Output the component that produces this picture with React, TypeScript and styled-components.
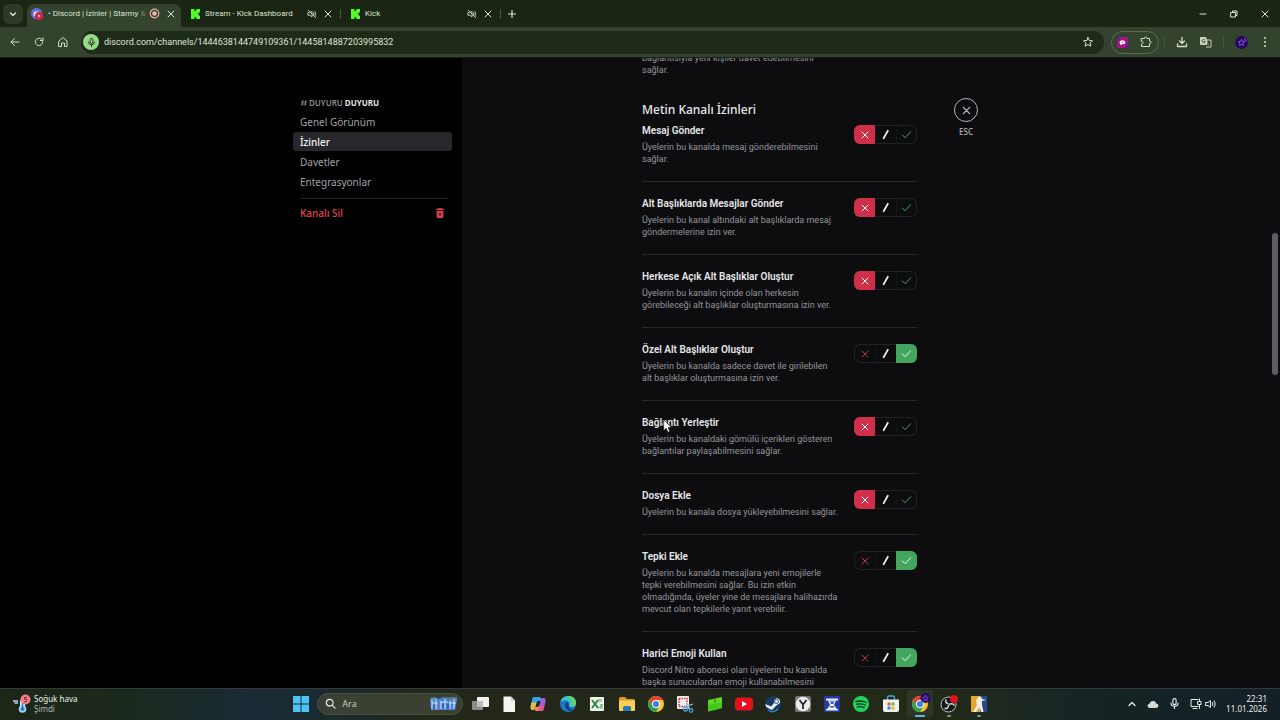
import React from "react";
import styled, { createGlobalStyle } from "styled-components";

const ui = `"Noto Sans", "Open Sans", sans-serif`;
const compact = `"Roboto", "Noto Sans", sans-serif`;

const GlobalStyle = createGlobalStyle`
  * { box-sizing: border-box; }
  html, body { margin: 0; background: #000; }
  body { font-family: ${ui}; overflow: hidden; }
  button { font-family: inherit; border: 0; padding: 0; background: none; color: inherit; }
  input { font-family: inherit; }
  svg { display: block; flex: none; }
`;

const Desktop = styled.div`
  display: flex;
  flex-direction: column;
  height: 100vh;
`;

/* ---------- Browser ---------- */

const TabStrip = styled.header`
  display: flex;
  align-items: stretch;
  flex: none;
  height: 27px;
  padding: 4px 0 0 3px;
  background: #1a2613;
  color: #dbe5d2;
`;

const TabSearch = styled.button`
  display: grid;
  place-items: center;
  width: 20px;
  height: 20px;
  margin-right: 4px;
  border-radius: 6px;
  background: #2c3a26 !important;
`;

const Tab = styled.div<{ $active?: boolean }>`
  display: flex;
  align-items: center;
  gap: 5px;
  flex: 0 1 ${(p) => (p.$active ? 154 : 159)}px;
  min-width: 0;
  padding: ${(p) => (p.$active ? "0 4px 4px" : "0 6px 4px 10px")};
  border-radius: 7px 7px 0 0;
  background: ${(p) => (p.$active ? "#34432e" : "transparent")};
`;

const TabTitle = styled.span`
  flex: 1;
  min-width: 0;
  white-space: nowrap;
  font-family: ${compact};
  font-size: 8px;
  line-height: 14px;
  span { color: #75846d; }
`;

const IconButton = styled.button`
  display: grid;
  place-items: center;
  flex: none;
  width: 12px;
  height: 16px;
`;

const Separator = styled.span<{ $tall?: boolean }>`
  flex: none;
  align-self: center;
  width: 1px;
  height: ${(p) => (p.$tall ? 12 : 10)}px;
  margin: ${(p) => (p.$tall ? "0 5px" : "0 0 4px")};
  background: #46573d;
`;

const NewTab = styled(IconButton)`
  width: 22px;
  height: 19px;
`;

const WindowControls = styled.div`
  display: flex;
  margin-left: auto;
  button { width: 31px; height: 19px; }
`;

const Toolbar = styled.div`
  display: flex;
  align-items: center;
  flex: none;
  height: 31px;
  padding: 0 3px 0 7px;
  border-bottom: 1px solid #18200f;
  background: #34432e;
  color: #d5dfcc;
`;

const NavButtons = styled.div`
  display: flex;
  gap: 8px;
  margin-right: 10px;
  button { width: 16px; }
`;

const AddressBar = styled.label`
  display: flex;
  align-items: center;
  flex: 1;
  height: 23px;
  gap: 5px;
  padding: 0 10px 0 2px;
  border-radius: 12px;
  background: #1e2b18;
`;

const MicBadge = styled.span`
  display: grid;
  place-items: center;
  width: 16px;
  height: 16px;
  border-radius: 50%;
  background: #9ad98c;
  color: #1d3516;
`;

const AddressInput = styled.input`
  flex: 1;
  min-width: 0;
  padding: 0;
  border: 0;
  outline: 0;
  background: none;
  color: #dde6d5;
  font-family: ${compact};
  font-size: 9px;
  line-height: 16px;
`;

const ExtensionPill = styled.div`
  display: flex;
  align-items: center;
  gap: 12px;
  height: 23px;
  margin-left: 7px;
  padding: 0 6px 0 5px;
  border: 1px solid #5b6e52;
  border-radius: 12px;
`;

const ToolbarEnd = styled.div`
  display: flex;
  align-items: center;
  button { width: 24px; }
`;

/* ---------- Channel settings ---------- */

const Settings = styled.div`
  display: flex;
  flex: 1;
  min-height: 0;
  overflow: hidden;
  background: #0d0d0f;
`;

const SidebarRegion = styled.aside`
  display: flex;
  justify-content: flex-end;
  flex: 1 0 132px;
  background: #000;
`;

const Sidebar = styled.nav`
  display: flex;
  flex-direction: column;
  gap: 1px;
  width: 169px;
  padding: 39px 10px 0 0;
`;

const SidebarHeading = styled.h2`
  display: flex;
  align-items: center;
  gap: 1px;
  margin: 0 0 2px;
  padding-left: 7px;
  color: #8b8c93;
  font-size: 8px;
  font-weight: 600;
  line-height: 12px;
  strong { color: #e4e4e8; font-weight: 700; }
`;

const SidebarLink = styled.a<{ $active?: boolean; $danger?: boolean }>`
  display: flex;
  align-items: center;
  justify-content: space-between;
  height: 19px;
  padding: 0 7px;
  border-radius: 3px;
  background: ${(p) => (p.$active ? "#28282c" : "transparent")};
  color: ${(p) => (p.$danger ? "#e04453" : p.$active ? "#f4f4f6" : "#a1a2a9")};
  font-size: 10px;
  font-weight: ${(p) => (p.$active || p.$danger ? 500 : 400)};
  line-height: 16px;
  text-decoration: none;
`;

const SidebarRule = styled.hr`
  width: 148px;
  height: 1px;
  margin: 6px 0 3px 7px;
  border: 0;
  background: #202023;
`;

const ContentRegion = styled.main`
  display: flex;
  flex: 1 1 488px;
  min-width: 0;
  padding-left: 180px;
`;

const PermissionColumn = styled.div`
  width: 275px;
  margin-top: -6px;
`;

const SectionTitle = styled.h1`
  margin: 24px 0 3px;
  color: #e9e9ec;
  font-size: 12px;
  font-weight: 500;
  line-height: 20px;
`;

const PermissionRow = styled.section`
  display: flex;
  justify-content: space-between;
  align-items: flex-start;
  padding-bottom: 16px;
  border-bottom: 1px solid #29292c;
  & + & { padding-top: 14px; }
`;

const PermissionName = styled.h3`
  margin: 0 0 2px;
  color: #e6e6ea;
  font-family: ${compact};
  font-size: 10px;
  font-weight: 600;
  line-height: 16px;
`;

const PermissionText = styled.p`
  margin: 0;
  color: #94959c;
  font-family: ${compact};
  font-size: 9px;
  line-height: 12px;
  white-space: pre;
`;

const ToggleGroup = styled.fieldset`
  display: flex;
  flex: none;
  height: 19px;
  margin: 2px 0 0;
  padding: 0;
  border: 0;
  border-radius: 6px;
  overflow: hidden;
  box-shadow: inset 0 0 0 1px #232326;
`;

const ToggleOption = styled.label<{ $fill: string; $ink: string }>`
  display: grid;
  place-items: center;
  width: 21px;
  height: 19px;
  color: ${(p) => p.$ink};
  & + & { box-shadow: inset 1px 0 #151517; }
  &:has(input:checked) { background: ${(p) => p.$fill}; color: #fff; box-shadow: none; }
  input, svg { grid-area: 1 / 1; }
  input { appearance: none; width: 100%; height: 100%; margin: 0; }
  svg { pointer-events: none; }
`;

const CloseColumn = styled.div`
  flex: none;
  width: 24px;
  margin: 40px 0 0 37px;
`;

const CloseButton = styled.button`
  display: flex;
  flex-direction: column;
  align-items: center;
  gap: 4px;
  width: 24px;
  color: #b4b5ba;
  font-size: 8px;
  font-weight: 500;
  line-height: 12px;
`;

const CloseRing = styled.span`
  display: grid;
  place-items: center;
  width: 24px;
  height: 24px;
  border: 1px solid #b2b3b8;
  border-radius: 50%;
`;

const ScrollThumb = styled.div`
  flex: none;
  width: 6px;
  height: 142px;
  margin: 175px 2px 0 auto;
  border-radius: 3px;
  background: #5c5c62;
`;

const Pointer = styled.svg`
  position: fixed;
  left: 663px;
  top: 419px;
`;

/* ---------- Taskbar ---------- */

const Taskbar = styled.footer`
  display: grid;
  grid-template-columns: 1fr 55vw 1fr;
  align-items: center;
  flex: none;
  height: 32px;
  padding-bottom: 2px;
  border-top: 1px solid #34383a;
  background: linear-gradient(90deg, #1c2716 0%, #1b291c 10%, #192a34 19%, #192a32 24%, #22281a 33%, #22261a 58%, #222b18 72%, #172425 85%, #132026 100%);
  color: #eef0ee;
`;

const Weather = styled.button`
  display: flex;
  align-items: center;
  gap: 3px;
  padding-left: 13px !important;
  text-align: left;
  font-size: 8px;
  line-height: 10px;
  small { display: block; font-size: 8px; color: #b3b9b3; }
`;

const Apps = styled.div`
  display: flex;
  align-items: center;
  justify-content: space-between;
`;

const AppButton = styled.button<{ $active?: boolean; $open?: boolean }>`
  display: grid;
  place-items: center;
  position: relative;
  width: 26px;
  height: 27px;
  border-radius: 3px;
  background: ${(p) => (p.$active ? "#303627" : "none")};
  &::after {
    content: "";
    position: absolute;
    bottom: 0;
    width: ${(p) => (p.$active ? 10 : p.$open ? 4 : 0)}px;
    height: 2px;
    border-radius: 1px;
    background: ${(p) => (p.$active ? "#62b7df" : "#8b9187")};
  }
`;

const SearchBox = styled.label`
  display: flex;
  align-items: center;
  gap: 6px;
  width: 146px;
  height: 22px;
  padding: 0 4px 0 7px;
  border: 1px solid #49503f;
  border-radius: 11px;
  background: #3a4133;
`;

const SearchInput = styled.input`
  flex: 1;
  min-width: 0;
  padding: 0;
  border: 0;
  outline: 0;
  background: none;
  font-size: 9px;
  line-height: 14px;
  &::placeholder { color: #c3c8be; opacity: 1; }
`;

const Tray = styled.div`
  display: flex;
  align-items: center;
  justify-content: flex-end;
  gap: 9px;
  padding-right: 13px;
`;

const TrayPair = styled.div`
  display: flex;
  gap: 3px;
`;

const Clock = styled.time`
  font-size: 8px;
  line-height: 10px;
  text-align: right;
`;

/* ---------- Icons ---------- */

type LineProps = { d: string; size?: number; width?: number; box?: number };

const Line = ({ d, size = 12, width = 1, box = 12 }: LineProps) => (
  <svg width={size} height={size} viewBox={`0 0 ${box} ${box}`} fill="none" stroke="currentColor" strokeWidth={width} strokeLinecap="round" strokeLinejoin="round" aria-hidden="true">
    <path d={d} />
  </svg>
);

const X = "M3 3l6 6M9 3l-6 6";
const MUTED = "M1.500 4.500h2l2.500-2v7l-2.500-2h-2zM8 4.500q1 1.500 0 3M9.500 3q2 3 0 6M1.500 1.500l9 9";
const MIC = "M6 1.500q1.500 0 1.500 1.500v2.500q0 1.500-1.500 1.500t-1.500-1.500v-2.500q0-1.500 1.500-1.500zM2.700 5.500q0 3 3.300 3t3.300-3M6 8.500v2.200";

const DiscordTabIcon = () => (
  <svg width="12" height="12" viewBox="0 0 12 12" aria-hidden="true">
    <circle cx="5.500" cy="5.500" r="5.500" fill="#6670dc" />
    <path d="M2.500 7.500q0-3 1.200-4h3.600q1.200 1 1.200 4l-1.500.8-.7-.9H4.700l-.7.9z" fill="#dfe2ff" />
    <circle cx="8" cy="8" r="4" fill="#d8234a" />
    <circle cx="8" cy="8" r="1" fill="#fff" />
  </svg>
);

const KickIcon = () => (
  <svg width="9" height="10" viewBox="0 0 9 10" aria-hidden="true">
    <path d="M0 0h3.500v2.200h1.100V1.100h1.100V0H9v3.300H7.900v1.100H6.800v1.200h1.100v1.100H9V10H5.700V8.900H4.600V7.800H3.500V10H0z" fill="#53fc28" />
  </svg>
);

const RecordIcon = () => (
  <svg width="11" height="11" viewBox="0 0 11 11" aria-hidden="true">
    <circle cx="5.500" cy="5.500" r="4.300" fill="none" stroke="#e7b3a4" strokeWidth="1.200" />
    <circle cx="5.500" cy="5.500" r="2.300" fill="#efb7a9" />
  </svg>
);

const ExtensionBadge = () => (
  <svg width="11" height="11" viewBox="0 0 11 11" aria-hidden="true">
    <rect width="11" height="11" fill="#a3157f" />
    <path d="M0 0h4L0 5zM11 11H7l4-4z" fill="#5c1b9c" />
    <path d="M2.500 5.500q.5-2.300 3.200-2.200Q8.500 3.500 8.500 5.500 8.200 7.300 5.500 7.200L3.500 8z" fill="#fff" />
    <path d="M4.500 5.700l2-.9" stroke="#a3157f" strokeWidth=".8" />
  </svg>
);

const ProfileIcon = ({ size = 13 }: { size?: number }) => (
  <svg width={size} height={size} viewBox="0 0 14 14" aria-hidden="true">
    <circle cx="7" cy="7" r="7" fill="#25075f" />
    <path d="M10 1l3 5-3-1z" fill="#7b4fc0" />
    <path d="M7 3.700l1 2.200 2.400.3-1.800 1.600.5 2.400L7 9l-2.100 1.200.5-2.400-1.800-1.600L6 5.900z" fill="none" stroke="#9c5bf5" strokeWidth=".9" />
  </svg>
);

const TrashIcon = () => (
  <svg width="10" height="10" viewBox="0 0 10 10" aria-hidden="true">
    <path d="M3.500 0h3v.8H9V2H1V.8h2.500zM1.600 2.800h6.800V8.600Q8.400 10 7 10H3Q1.600 10 1.600 8.600z" fill="#da4456" />
    <path d="M4 4.700l2 3M6 4.700l-2 3" stroke="#35070e" strokeWidth=".8" />
  </svg>
);

const ChromeIcon = ({ badge = false }: { badge?: boolean }) => (
  <svg width="22" height="22" viewBox="0 0 22 22" aria-hidden="true">
    <circle cx="11" cy="11" r="8" fill="#f5c52d" />
    <path d="M4.100 7A8 8 0 0 1 18 7h-7A4 4 0 0 0 7.500 13z" fill="#e0422f" />
    <path d="M4.100 7A8 8 0 0 0 11 19l3.500-6a4 4 0 0 1-7 0z" fill="#2fa04e" />
    <circle cx="11" cy="11" r="4" fill="#fff" />
    <circle cx="11" cy="11" r="3.100" fill="#3e7fe8" />
    {badge && (
      <g>
        <circle cx="16.500" cy="5" r="5" fill="#2a0b66" />
        <path d="M16.500 2.500l.8 1.700 1.900.2-1.400 1.300.4 1.900-1.700-1-1.700 1 .4-1.900-1.400-1.300 1.900-.2z" fill="none" stroke="#9c6bf0" strokeWidth=".6" />
      </g>
    )}
  </svg>
);

const Art = ({ children }: { children: React.ReactNode }) => (
  <svg width="18" height="18" viewBox="0 0 18 18" aria-hidden="true">{children}</svg>
);

const apps: { name: string; art: React.ReactNode; open?: boolean; active?: boolean }[] = [
  { name: "Görev görünümü", art: <Art><rect x="6" y="2" width="12" height="10" rx="1" fill="#f1f1ef" /><rect x="1" y="6" width="11" height="9" rx="1" fill="#8b8d88" /><path d="M6 6h6v6H6z" fill="#bdbfba" /></Art> },
  { name: "Belge", art: <Art><path d="M3.500 1.500h7.500l4 4V17H3.500z" fill="#f4f4f1" /><path d="M11 1.500v4h4z" fill="#c5c7c3" /></Art> },
  { name: "Copilot", art: <Art><path d="M4.500 2h6q1.500 0 2 2l.5 2H9.500q-1.500 0-2 2L6 13q-.5 2-2 2-3 0-2.300-4L3 5q.5-3 1.500-3z" fill="#32a3e6" /><path d="M1.700 11l.8-3.500h5L6 13q-.5 2-2 2-3 0-2.300-4z" fill="#e3c044" /><path d="M13.500 16h-6q-1.500 0-2-2L5 12h3.500q1.500 0 2-2L12 5q.5-2 2-2 3 0 2.300 4L15 13q-.5 3-1.500 3z" fill="#dc5796" /><path d="M16.300 7l-.8 3.500h-5L12 5q.5-2 2-2 3 0 2.300 4z" fill="#a35be0" /><path d="M5.200 12.700L5 12h3.500q1 0 1.500-.8L9.500 16h-2q-1.500 0-2-2z" fill="#ef8a4a" /></Art> },
  { name: "Edge", art: <Art><circle cx="9" cy="9" r="8" fill="#1b76c9" /><path d="M1.300 7Q3 1 9 1q7.500 0 8 7-.3 4-5 4-2 0-2.500-1.200Q11 9 10 7.500 8 4.500 4.500 5.500 2.500 6 1.300 7z" fill="#3cc4c0" /><path d="M9 1q7.500 0 8 7-.3 4-5 4 4-4-3-11z" fill="#63d66a" /><path d="M6.500 8q-1.500 5 3 7.500 3 1 5-.8-3.500.3-5-3.200Q10.500 9 9 7.800 7.500 7 6.500 8z" fill="#123d78" /></Art> },
  { name: "Excel", art: <Art><rect x="2" y="2" width="14" height="14" rx="1" fill="#edf3e8" /><path d="M10 4h4v3h-4zM12 9h3v5h-3z" fill="#a5cda3" /><path d="M4 5l6 8M10 5l-6 8" stroke="#2f8548" strokeWidth="2" /><path d="M10 13q4 0 4-4" stroke="#68ad70" fill="none" /></Art> },
  { name: "Dosya Gezgini", art: <Art><path d="M1 3.500Q1 2 2.500 2H7l2 2h6.500Q17 4 17 5.500V8H1z" fill="#d99b20" /><rect x="1" y="5.500" width="16" height="10.500" rx="1" fill="#f8d054" /><path d="M5 16v-3.500Q5 11 6.500 11h5q1.500 0 1.500 1.500V16z" fill="#2779bf" /></Art> },
  { name: "Chrome", art: <ChromeIcon /> },
  { name: "Ekran Alıntısı", art: <Art><rect x="1" y="1" width="12" height="13" rx="1" fill="#f1eeee" /><rect x="3" y="3.500" width="8" height="8" fill="none" stroke="#cb3345" strokeWidth="1.500" strokeDasharray="1.500 1" /><path d="M9 12l8-3M11 8l3 7" stroke="#a2c5dc" strokeWidth="1.300" /><circle cx="9.500" cy="14" r="2" fill="none" stroke="#4b9dd5" strokeWidth="1.300" /><circle cx="15" cy="15.500" r="1.800" fill="none" stroke="#4b9dd5" strokeWidth="1.300" /></Art> },
  { name: "Yayın", art: <Art><path d="M2 5l14-3v11L2 16.500z" fill="#5bdb22" /><path d="M9 3.500v4.500M7 9v6" stroke="#2c7d14" strokeWidth="1" /><path d="M2 10l14-2.500V13L2 16.500z" fill="#46c81a" /></Art> },
  { name: "YouTube", art: <Art><rect x="0" y="2.500" width="18" height="13" rx="3.500" fill="#e5101d" /><path d="M7 6l5 3-5 3z" fill="#fff" /></Art> },
  { name: "Steam", art: <Art><circle cx="9" cy="9" r="8" fill="#143a63" /><path d="M1.200 9l6 2.600L10 8V5l3-2 3 2v3l-3 2-3.200 3q-1 3-4 1L2.300 12z" fill="#e9f1f6" /><circle cx="12.500" cy="6.500" r="2" fill="none" stroke="#24517b" /><path d="M4 15q5 4 10-1" stroke="#2e83bd" fill="none" strokeWidth="1.500" /></Art> },
  { name: "Saat", art: <Art><rect x="1" y="1" width="16" height="16" rx="2" fill="#72767a" /><circle cx="9" cy="9" r="7.300" fill="#e9ebea" /><path d="M5.500 5L9 9.500 12.500 5M9 9.500V14" fill="none" stroke="#1c2125" strokeWidth="1.700" /></Art> },
  { name: "Mağaza aracı", art: <Art><rect x="1" y="1" width="16" height="16" rx="1" fill="#243aa0" /><path d="M3 3.500h12v2H3z" fill="#eaf0ff" /><path d="M5 5.500h8L11 10l3 4H4l3-4z" fill="#eaf0ff" /><path d="M7 6.500h4.500L10 9H8zM7.500 11h3l1 1.500h-5z" fill="#3a54b8" /><path d="M3 14h12v1.500H3z" fill="#eaf0ff" /></Art> },
  { name: "Spotify", art: <Art><circle cx="9" cy="9" r="8" fill="#23d35f" /><path d="M4 6.500q5.500-1.500 10.300 1M4.700 9.300q4.500-1.200 8.500.8M5.200 11.900q3.800-.8 6.800.8" fill="none" stroke="#0e3a1c" strokeWidth="1.400" strokeLinecap="round" /></Art> },
  { name: "Microsoft Store", art: <Art><path d="M5.500 5V2.500Q5.500 1 7 1h4q1.500 0 1.500 1.500V5" fill="none" stroke="#3ca8df" strokeWidth="1.400" /><path d="M1 4.500h16V15q0 2-2 2H3q-2 0-2-2z" fill="#f0f1ef" /><path d="M5.500 7.500h3v3h-3z" fill="#e55a37" /><path d="M9.500 7.500h3v3h-3z" fill="#74b63e" /><path d="M5.500 11.500h3v3h-3z" fill="#2d8fd8" /><path d="M9.500 11.500h3v3h-3z" fill="#edb72b" /></Art> },
  { name: "Chrome profili", art: <ChromeIcon badge />, active: true },
  { name: "OBS Studio", open: true, art: <Art><circle cx="8.500" cy="9.500" r="7.500" fill="#15181a" stroke="#bfc3c1" /><path d="M8.500 9Q5 8 6 4.500M9 9.500q3.500-2 5.500 1M8.500 10q0 4-4 3.500" fill="none" stroke="#d1d5d3" strokeWidth="1.500" /><circle cx="14" cy="4" r="4" fill="#e3131b" /></Art> },
  { name: "Counter-Strike 2", open: true, art: <Art><path d="M1 1h9v16H1z" fill="#e9a42b" /><path d="M10 1h7v16h-7z" fill="#27488b" /><path d="M8 2l3-.5 1 2.500 4 1-4 1v4l1.500 7H11L9.500 12 6 17H3l4-7-1-4z" fill="#eef0ea" /></Art> },
];

/* ---------- Data ---------- */

type Choice = "deny" | "inherit" | "allow";

const permissions: { name: string; text: string; value: Choice }[] = [
  { name: "Mesaj Gönder", text: "Üyelerin bu kanalda mesaj gönderebilmesini\nsağlar.", value: "deny" },
  { name: "Alt Başlıklarda Mesajlar Gönder", text: "Üyelerin bu kanal altındaki alt başlıklarda mesaj\ngöndermelerine izin ver.", value: "deny" },
  { name: "Herkese Açık Alt Başlıklar Oluştur", text: "Üyelerin bu kanalın içinde olan herkesin\ngörebileceği alt başlıklar oluşturmasına izin ver.", value: "deny" },
  { name: "Özel Alt Başlıklar Oluştur", text: "Üyelerin bu kanalda sadece davet ile girilebilen\nalt başlıklar oluşturmasına izin ver.", value: "allow" },
  { name: "Bağlantı Yerleştir", text: "Üyelerin bu kanaldaki gömülü içerikleri gösteren\nbağlantılar paylaşabilmesini sağlar.", value: "deny" },
  { name: "Dosya Ekle", text: "Üyelerin bu kanala dosya yükleyebilmesini sağlar.", value: "deny" },
  { name: "Tepki Ekle", text: "Üyelerin bu kanalda mesajlara yeni emojilerle\ntepki verebilmesini sağlar. Bu izin etkin\nolmadığında, üyeler yine de mesajlara halihazırda\nmevcut olan tepkilerle yanıt verebilir.", value: "allow" },
  { name: "Harici Emoji Kullan", text: "Discord Nitro abonesi olan üyelerin bu kanalda\nbaşka sunuculardan emoji kullanabilmesini", value: "allow" },
];

const choices: { id: Choice; label: string; fill: string; ink: string; d: string; width: number }[] = [
  { id: "deny", label: "Reddet", fill: "#cf2f48", ink: "#b23a4b", d: X, width: 1 },
  { id: "inherit", label: "Varsayılan", fill: "#3a3a40", ink: "#f2f2f4", d: "M8.500 2L4 10", width: 2 },
  { id: "allow", label: "İzin ver", fill: "#43a55e", ink: "#55ab6d", d: "M1.500 6.500l3 3 6-6.500", width: 1 },
];

const Permission = ({ name, text, value }: { name: string; text: string; value: Choice }) => (
  <PermissionRow>
    <div>
      <PermissionName>{name}</PermissionName>
      <PermissionText>{text}</PermissionText>
    </div>
    <ToggleGroup aria-label={name}>
      {choices.map((c) => (
        <ToggleOption key={c.id} $fill={c.fill} $ink={c.ink}>
          <input type="radio" name={name} aria-label={c.label} defaultChecked={c.id === value} />
          <Line d={c.d} width={c.width} size={c.id === "deny" ? 12 : 11} />
        </ToggleOption>
      ))}
    </ToggleGroup>
  </PermissionRow>
);

export default function App() {
  return (
    <Desktop>
      <GlobalStyle />
      <TabStrip>
        <TabSearch aria-label="Sekmelerde ara"><Line d="M3.500 5L6 7.500 8.500 5" width={1.3} /></TabSearch>
        <Tab $active>
          <DiscordTabIcon />
          <TabTitle>• Discord | İzinler | Starmy <span>&amp;</span></TabTitle>
          <RecordIcon />
          <IconButton aria-label="Kapat"><Line d={X} /></IconButton>
        </Tab>
        <Tab>
          <KickIcon />
          <TabTitle>Stream - Kick Dashboard</TabTitle>
          <Line d={MUTED} size={10} />
          <IconButton aria-label="Kapat"><Line d={X} /></IconButton>
        </Tab>
        <Separator />
        <Tab>
          <KickIcon />
          <TabTitle>Kick</TabTitle>
          <Line d={MUTED} size={10} />
          <IconButton aria-label="Kapat"><Line d={X} /></IconButton>
        </Tab>
        <Separator />
        <NewTab aria-label="Yeni sekme"><Line d="M6 2.500v7M2.500 6h7" width={1.2} /></NewTab>
        <WindowControls>
          <IconButton aria-label="Simge durumuna küçült"><Line d="M3 6h6" /></IconButton>
          <IconButton aria-label="Geri yükle"><Line d="M3 4.500h4.500V9H3zM4.500 4.500V3H9v4.500H7.500" /></IconButton>
          <IconButton aria-label="Pencereyi kapat"><Line d={X} /></IconButton>
        </WindowControls>
      </TabStrip>
      <Toolbar>
        <NavButtons>
          <IconButton aria-label="Geri"><Line d="M10 6H2M5.500 2.500L2 6l3.500 3.500" /></IconButton>
          <IconButton aria-label="Yenile"><Line d="M9.700 6a3.700 3.700 0 1 1-1.200-2.800L10 4.500M10 1.800v2.700H7.300" /></IconButton>
          <IconButton aria-label="Ana sayfa"><Line d="M2 5l4-3.500L10 5v5.500H7.500V7h-3v3.500H2z" /></IconButton>
        </NavButtons>
        <AddressBar>
          <MicBadge><Line d={MIC} size={11} /></MicBadge>
          <AddressInput aria-label="Adres" defaultValue="discord.com/channels/1444638144749109361/1445814887203995832" />
          <Line d="M6 1.500l1.300 3 3.200.3L8.100 7l.7 3.200L6 8.500l-2.800 1.700L3.900 7 1.500 4.800l3.200-.3z" />
        </AddressBar>
        <ExtensionPill>
          <ExtensionBadge />
          <Line d="M1.500 2.500h3q0-1.500 1.300-1.500T7 2.500h2.500V5Q11 5 11 6.200T9.500 7.500v3h-8V8Q3 8 3 6.500T1.500 5z" />
        </ExtensionPill>
        <Separator $tall />
        <ToolbarEnd>
          <IconButton aria-label="İndirilenler"><Line d="M6 1.500V7.500M3.500 5L6 7.500 8.500 5M1.500 8v2.500h9V8" width={1.3} /></IconButton>
          <IconButton aria-label="Çevir">
            <svg width="12" height="12" viewBox="0 0 12 12" aria-hidden="true">
              <path d="M0 1h6l3 8H1Q0 9 0 8z" fill="#c5d0bd" />
              <path d="M5 4h6v7H6" fill="none" stroke="#c5d0bd" />
              <path d="M5 4.200a1.600 1.600 0 1 0 .2 1.300H4M7 6h3M8.500 5v1q0 2-1.500 3M7.500 7l2 2" fill="none" stroke="#34432e" strokeWidth=".8" />
            </svg>
          </IconButton>
        </ToolbarEnd>
        <Separator $tall />
        <ToolbarEnd>
          <IconButton aria-label="Profil"><ProfileIcon /></IconButton>
          <IconButton aria-label="Menü">
            <svg width="4" height="12" viewBox="0 0 4 12" fill="currentColor" aria-hidden="true"><circle cx="2" cy="2" r="1" /><circle cx="2" cy="6" r="1" /><circle cx="2" cy="10" r="1" /></svg>
          </IconButton>
        </ToolbarEnd>
      </Toolbar>

      <Settings>
        <SidebarRegion>
          <Sidebar>
            <SidebarHeading>
              <Line d="M4.500 2L3 10M9 2L7.500 10M2 4.500h8M1.500 7.500h8" size={8} width={1.2} />
              <span>DUYURU <strong>DUYURU</strong></span>
            </SidebarHeading>
            <SidebarLink href="#genel">Genel Görünüm</SidebarLink>
            <SidebarLink href="#izinler" $active>İzinler</SidebarLink>
            <SidebarLink href="#davetler">Davetler</SidebarLink>
            <SidebarLink href="#entegrasyonlar">Entegrasyonlar</SidebarLink>
            <SidebarRule />
            <SidebarLink href="#sil" $danger>Kanalı Sil<TrashIcon /></SidebarLink>
          </Sidebar>
        </SidebarRegion>
        <ContentRegion>
          <PermissionColumn>
            <PermissionText>{"bağlantısıyla yeni kişiler davet edebilmesini\nsağlar."}</PermissionText>
            <SectionTitle>Metin Kanalı İzinleri</SectionTitle>
            {permissions.map((p) => <Permission key={p.name} {...p} />)}
          </PermissionColumn>
          <CloseColumn>
            <CloseButton>
              <CloseRing><Line d={X} size={13} /></CloseRing>
              ESC
            </CloseButton>
          </CloseColumn>
          <ScrollThumb />
        </ContentRegion>
      </Settings>

      <Taskbar>
        <Weather>
          <svg width="18" height="20" viewBox="0 0 18 20" aria-hidden="true">
            <path d="M0 7h5M1.500 9H5" stroke="#b9d4e8" strokeWidth="1.500" />
            <rect x="7" y="5" width="5" height="11" rx="2.500" fill="#dceaf4" />
            <circle cx="9.500" cy="15" r="3.800" fill="#a9d5f2" />
            <path d="M9.500 9v5" stroke="#2481c4" strokeWidth="1.500" />
            <circle cx="9.500" cy="15" r="2" fill="#2481c4" />
            <circle cx="12.500" cy="5.500" r="5" fill="#ee7f8f" />
            <path d="M14 3.500h-2.500v1.700q2.500-.4 2.500 1.300T11.300 8" fill="none" stroke="#71222f" />
          </svg>
          <span>Soğuk hava<small>Şimdi</small></span>
        </Weather>
        <Apps>
          <AppButton aria-label="Başlat">
            <Art><path d="M1 1h7.500v7.500H1zM9.500 1H17v7.500H9.500zM1 9.500h7.500V17H1zM9.500 9.500H17V17H9.500z" fill="#4cc2f5" /></Art>
          </AppButton>
          <SearchBox>
            <Line d="M5.200 1.500a3.700 3.700 0 1 1 0 7.400a3.700 3.700 0 1 1 0-7.400M8 8l3 3" size={11} width={1.2} />
            <SearchInput type="text" placeholder="Ara" aria-label="Ara" />
            <svg width="28" height="15" viewBox="0 0 28 15" aria-hidden="true">
              <path d="M0 2l5-1 3 2 6-2 5 2 8-2v3l-2 10H1z" fill="#4c7fd3" />
              <path d="M2 4v9M6 3v10M11 5v8M15 3v10M20 5v8M24 3v10M2 7h6M10 6h8M19 7h7" stroke="#bfe0f7" strokeWidth="1.200" />
              <path d="M1 3h7M16 2h9" stroke="#4faf72" />
              <path d="M8 13V8M22 4h4" stroke="#d0795c" />
              <path d="M4 9v4M13 8v4M18 8v5" stroke="#26408d" />
            </svg>
          </SearchBox>
          {apps.map((a) => (
            <AppButton key={a.name} aria-label={a.name} $active={a.active} $open={a.open}>{a.art}</AppButton>
          ))}
        </Apps>
        <Tray>
          <Line d="M3 7.500L6 4.500l3 3" size={12} width={1.2} />
          <svg width="12" height="10" viewBox="0 0 12 10" fill="#d5d9d8" aria-hidden="true"><path d="M3 9Q.5 9 .5 7T2.500 4.700Q3.200 2 6 2q2.500 0 3.200 2.400 2.300.2 2.300 2.300T9 9z" /></svg>
          <Line d={MIC} size={13} />
          <TrayPair>
            <Line d="M8 1.500H1v7h7M3 10.500h4M8 6.500h3v-3H8zM9.500 1v2.500M9.500 6.500v4" size={12} />
            <Line d="M1 4.500h2l2.500-2v7L3 7.500H1zM7.500 4.500q1 1.500 0 3M9.300 2.800q2.200 3.200 0 6.400" size={12} />
          </TrayPair>
          <Clock>22:31<br />11.01.2026</Clock>
        </Tray>
      </Taskbar>

      <Pointer width="10" height="15" viewBox="0 0 10 15" aria-hidden="true">
        <path d="M.7.700v11l2.500-2.400 1.700 4 2-.8-1.700-4h3.500z" fill="#fff" stroke="#111" strokeWidth=".7" />
      </Pointer>
    </Desktop>
  );
}
